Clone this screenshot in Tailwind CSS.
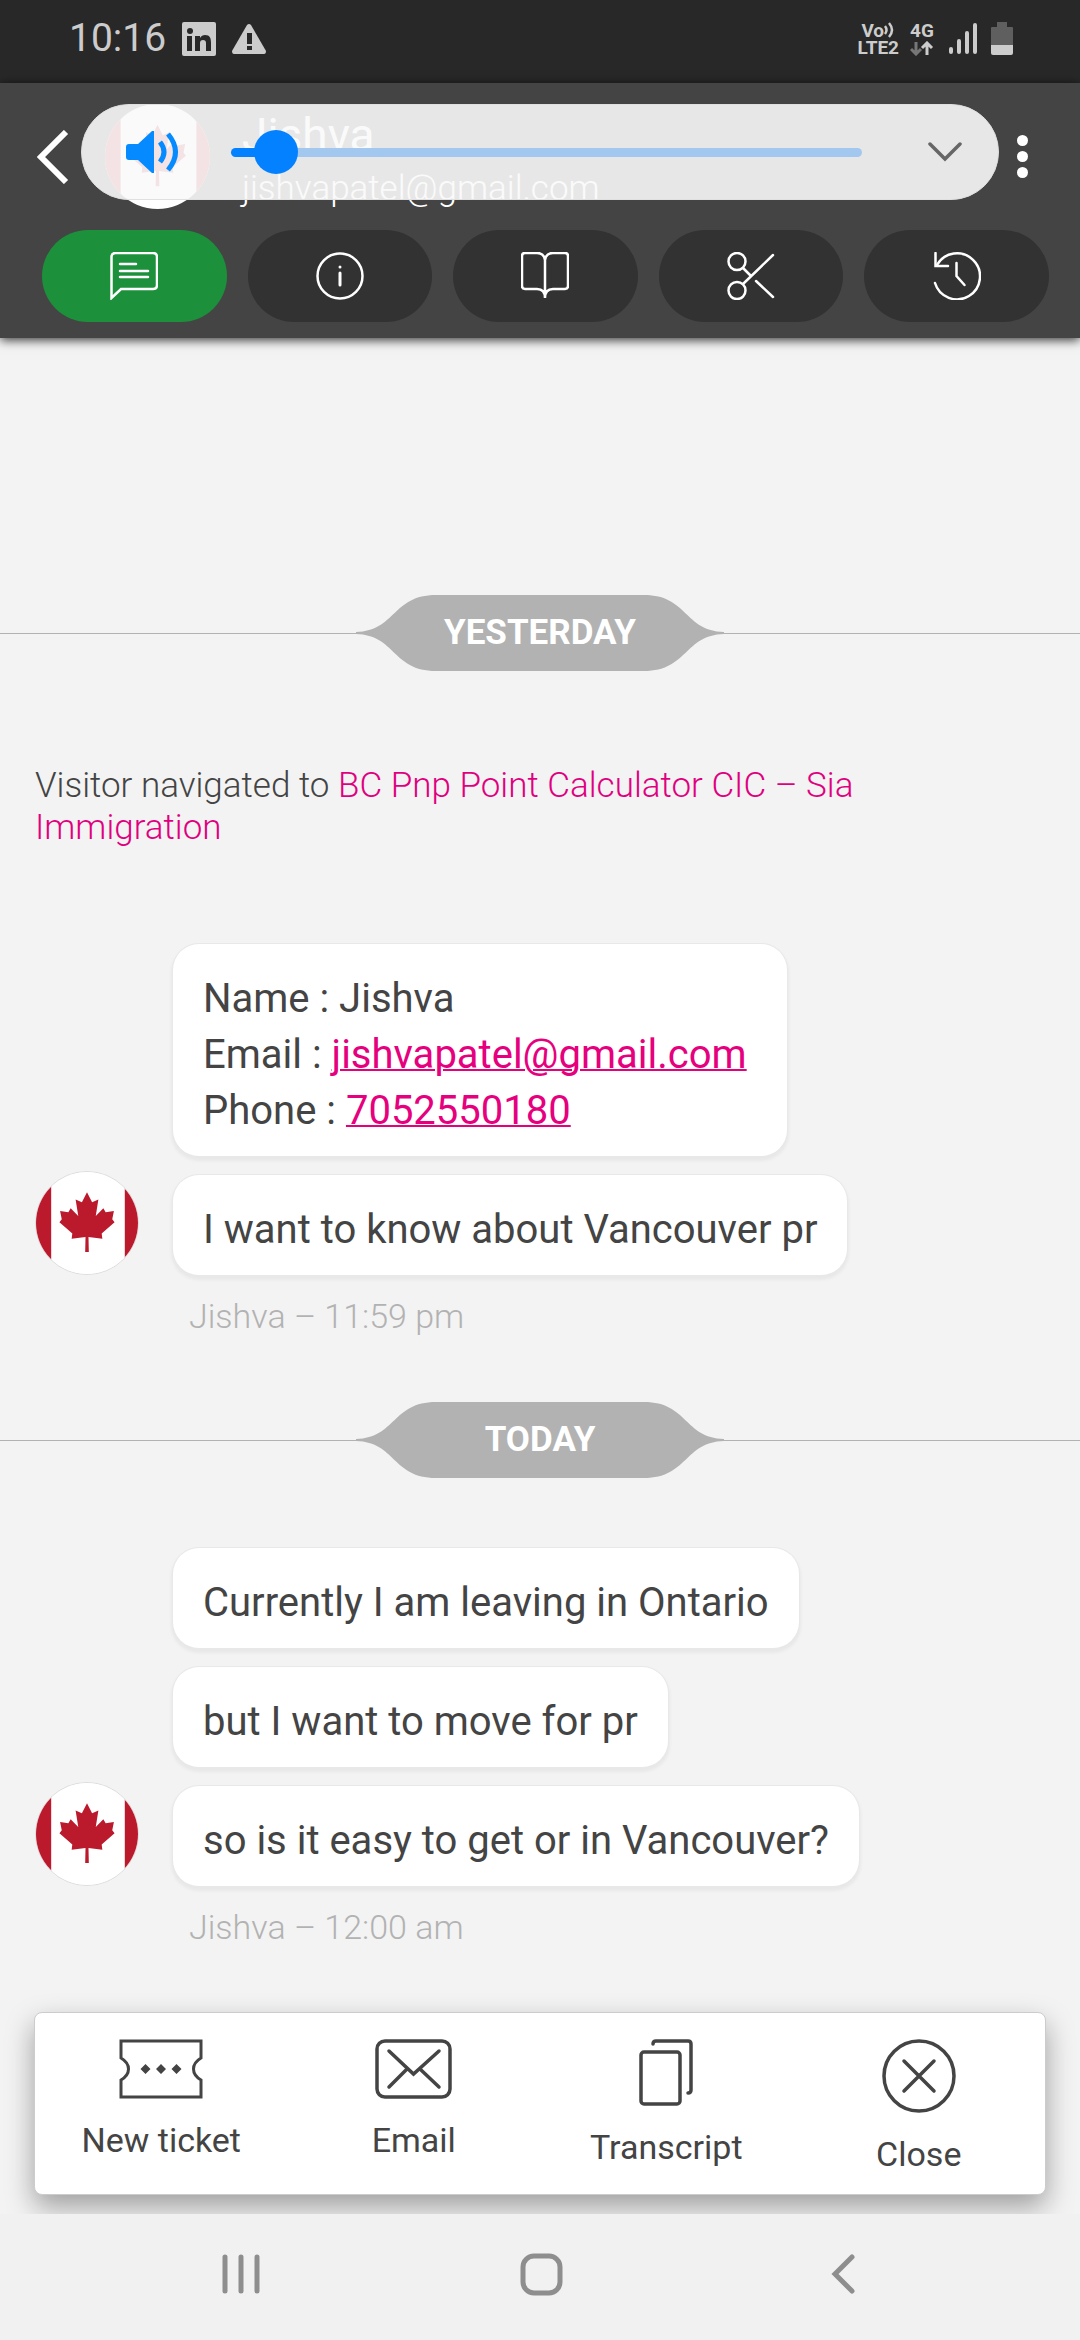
<!DOCTYPE html>
<html lang="en">
<head>
    <meta charset="UTF-8">
    <title>Chat - Jishva</title>
    <meta name="viewport" content="width=device-width, initial-scale=1">
    <script src="https://cdn.jsdelivr.net/npm/@tailwindcss/browser@4"></script>
</head>
<body class="bg-[#f3f3f3] min-h-screen flex flex-col font-['Roboto',sans-serif] text-[#444444]">

    <!-- shared drawings -->
    <svg class="hidden">
        <symbol id="flag" viewBox="0 0 309 309">
            <rect width="309" height="309" fill="#fff"/>
            <rect width="46" height="309" fill="#bb1a2d"/>
            <rect x="269" width="40" height="309" fill="#bb1a2d"/>
            <path fill="#bb1a2d" d="M154.5 61L170 92l19-9-8 50 23-23 7 12 25-4-5 25 7 9-39 34 2 16-42-5 1 45h-11l1-45-42 5 2-16-39-34 7-9-5-25 25 4 7-12 23 23-8-50 19 9z"/>
        </symbol>
        <symbol id="badge" viewBox="0 0 368 76">
            <path fill="#b2b2b2" d="M0 37C40 36 36 0 80 0H288C332 0 328 36 368 37V39C328 40 332 76 288 76H80C36 76 40 40 0 39Z"/>
        </symbol>
    </svg>

    <!-- status bar -->
    <div class="bg-[#282828] text-[#cccccc] h-[83px] pl-[69px] pr-[67px] pb-1.5 flex items-center justify-between">
        <div class="flex items-center gap-4">
            <span class="text-[39px] leading-none">10:16</span>
            <svg class="w-[34px] h-[34px]" viewBox="0 0 34 34">
                <rect width="34" height="34" rx="2" fill="#cccccc"/>
                <g fill="#282828"><circle cx="8" cy="9" r="3"/><rect x="5" y="14" width="5" height="15"/><path d="M13 14h5v2c1-2 3-3 5-3 5 0 6 3 6 8v8h-5v-8c0-2-1-3-3-3s-3 1-3 3v8h-5z"/></g>
            </svg>
            <svg class="w-[34px] h-[30px]" viewBox="0 0 34 30">
                <path fill="#cccccc" d="M15 1q2-2 4 0l15 26q0 3-2 3H2q-2 0-2-3z"/>
                <path fill="#282828" d="M15 9h5v11h-5zM15 22h5v4h-5z"/>
            </svg>
        </div>
        <div class="flex items-center gap-[11px] font-bold leading-none">
            <div class="flex flex-col items-center text-[19px] leading-[17px]">
                <span class="flex items-center">Vo<svg class="w-[11px] h-4" viewBox="0 0 11 16" fill="none" stroke="#cccccc" stroke-width="2.5"><path d="M1 4q3 4 0 8M5 1q6 7 0 14"/></svg></span>
                <span>LTE2</span>
            </div>
            <div class="flex flex-col items-center gap-[2px] text-[19px] leading-[17px]">
                <span>4G</span>
                <svg class="w-6 h-[15px]" viewBox="0 0 24 15" fill="none" stroke-width="3"><path stroke="#777" d="M6 1v12M1 8l5 5 5-5"/><path stroke="#cccccc" d="M17 14V2M12 7l5-5 5 5"/></svg>
            </div>
            <svg class="w-[28px] h-[31px] ml-1" viewBox="0 0 28 31" stroke="#cccccc" stroke-width="4" stroke-linecap="round"><path d="M2 26v3M10 18v11M18 10v19M26 2v27"/></svg>
            <svg class="w-[22px] h-[33px] ml-[3px]" viewBox="0 0 22 33"><path fill="#5f5f5f" d="M6 0h10v5h5q1 0 1 1v17H0V6q0-1 1-1h5z"/><path fill="#cccccc" d="M0 23h22v8q0 2-2 2H2q-2 0-2-2z"/></svg>
        </div>
    </div>

    <!-- header -->
    <header class="relative z-10 bg-[#444444] pt-[21px] pb-4 shadow-[0_2px_10px_rgba(0,0,0,0.8)]">
        <div class="flex items-start h-[105px] pl-[37px] pr-[52px]">
            <button type="button" aria-label="Back" class="w-[32px] h-[105px] flex items-center">
                <svg class="w-[32px] h-[54px]" viewBox="0 0 32 54" fill="none" stroke="#fff" stroke-width="6"><path d="M29 2L4 27l25 25"/></svg>
            </button>
            <svg class="ml-9 w-[105px] h-[105px] rounded-full"><use href="#flag"/></svg>
            <div class="ml-8 pt-1 flex-1 text-white leading-[54px]">
                <h1 class="text-[46px]">Jishva</h1>
                <p class="text-[35px] font-light">jishvapatel@gmail.com</p>
            </div>
            <button type="button" aria-label="Menu" class="h-[105px] flex items-center">
                <svg class="w-[11px] h-[43px]" viewBox="0 0 11 43" fill="#fff"><circle cx="5.5" cy="5.5" r="5.5"/><circle cx="5.5" cy="21.5" r="5.5"/><circle cx="5.5" cy="37.5" r="5.5"/></svg>
            </button>
        </div>

        <nav class="mt-[21px] pl-[42px] pr-[31px] grid grid-cols-5 gap-[21px]">
            <button type="button" aria-label="Chat" class="bg-[#1c903b] h-[92px] rounded-full flex items-center justify-center">
                <svg class="w-12 h-12" viewBox="0 0 48 48" fill="none" stroke="#fff" stroke-width="2.5" stroke-linecap="round"><path d="M1.5 46V5q0-4 4-4H43q4 0 4 4v28q0 4-4 4H11z"/><path d="M10 12h16M10 19h28M10 25h28"/></svg>
            </button>
            <button type="button" aria-label="Info" class="bg-[#323232] h-[92px] rounded-full flex items-center justify-center">
                <svg class="w-12 h-12" viewBox="0 0 48 48" fill="none" stroke="#fff" stroke-width="2.5"><circle cx="24" cy="24" r="22.5"/><path stroke-width="3" stroke-linecap="round" d="M24 21v12"/><circle cx="24" cy="15" r="1.5" fill="#fff" stroke="none"/></svg>
            </button>
            <button type="button" aria-label="Knowledge base" class="bg-[#323232] h-[92px] rounded-full flex items-center justify-center">
                <svg class="w-12 h-12" viewBox="0 0 48 48" fill="none" stroke="#fff" stroke-width="2.5"><path d="M24 8q-1-7-8-7H4q-3 0-3 3v30q0 3 3 3h12q8 0 8 9 0-9 8-9h12q3 0 3-3V4q0-3-3-3H32q-7 0-8 7v38"/></svg>
            </button>
            <button type="button" aria-label="Cut" class="bg-[#323232] h-[92px] rounded-full flex items-center justify-center">
                <svg class="w-12 h-12" viewBox="0 0 48 48" fill="none" stroke="#fff" stroke-width="2.5" stroke-linecap="round"><circle cx="10" cy="9.5" r="8.5"/><circle cx="10" cy="38.5" r="8.5"/><path d="M16 32L46 3M16 16l8 8M29 29l17 16"/></svg>
            </button>
            <button type="button" aria-label="History" class="bg-[#323232] h-[92px] rounded-full flex items-center justify-center">
                <svg class="w-12 h-12" viewBox="0 0 48 48" fill="none" stroke="#fff" stroke-width="2.5" stroke-linecap="round"><path d="M2 31A23 23 0 1 0 4 13"/><path d="M2.500 1v13H15"/><path d="M23.500 11v13l8 9"/></svg>
            </button>
        </nav>

        <!-- volume popup -->
        <div class="absolute top-[21px] inset-x-[81px] h-24 rounded-full bg-[#fafafa]/90 border border-[#e0e0e0] flex items-center pl-11 pr-9">
            <svg class="w-[53px] h-[42px]" viewBox="0 0 53 42"><path fill="#058bff" d="M0 16q0-3 3-3h9L26 0h2v42h-2L12 29H3q-3 0-3-3z"/><path fill="none" stroke="#058bff" stroke-width="5" d="M34 11q8 10 0 20M42 3q15 18 0 36"/></svg>
            <input type="range" aria-label="Volume" min="0" max="100" value="4" class="appearance-none ml-[52px] flex-1 h-[9px] rounded-full bg-linear-to-r from-[#0381fe] from-7% to-[#a3c8ef] to-7% [&::-webkit-slider-thumb]:appearance-none [&::-webkit-slider-thumb]:w-11 [&::-webkit-slider-thumb]:h-11 [&::-webkit-slider-thumb]:rounded-full [&::-webkit-slider-thumb]:bg-[#0381fe]">
            <button type="button" aria-label="Expand" class="ml-[66px]">
                <svg class="w-[34px] h-5" viewBox="0 0 34 20" fill="none" stroke="#666" stroke-width="3.500" stroke-linecap="round"><path d="M2 2l15 15L32 2"/></svg>
            </button>
        </div>
    </header>

    <!-- conversation -->
    <main class="flex-1 pt-[257px]">
        <div class="flex items-center">
            <hr class="flex-1 border-[#b2b2b2]">
            <div class="relative w-[368px] h-[76px] flex items-center justify-center">
                <svg class="absolute inset-0 w-full h-full"><use href="#badge"/></svg>
                <span class="relative text-[35px] font-bold text-white">YESTERDAY</span>
            </div>
            <hr class="flex-1 border-[#b2b2b2]">
        </div>

        <p class="mx-[35px] mt-[94px] mb-[95px] max-w-[900px] text-[35px] leading-[42px] font-light">Visitor navigated to <a href="#" class="text-[#e0007f]">BC Pnp Point Calculator CIC – Sia Immigration</a></p>

        <section class="px-[35px]">
            <div class="flex items-end gap-[34px]">
                <svg class="w-[104px] h-[104px] rounded-full border border-[#dddddd]"><use href="#flag"/></svg>
                <div class="flex flex-col items-start gap-[19px] text-[40px] leading-[56px]">
                    <div class="bg-white rounded-[26px] pl-[30px] pr-10 pt-[27px] pb-[17px] shadow-[0_0_0_1px_#e8e8e8,0_3px_3px_2px_#e8e8e8]">
                        <p>Name : Jishva</p>
                        <p>Email : <a href="#" class="text-[#e6007e] underline decoration-2">jishvapatel@gmail.com</a></p>
                        <p>Phone : <a href="#" class="text-[#e6007e] underline decoration-2">7052550180</a></p>
                    </div>
                    <p class="bg-white rounded-[26px] px-[30px] pt-[27px] pb-[17px] shadow-[0_0_0_1px_#e8e8e8,0_3px_3px_2px_#e8e8e8]">I want to know about Vancouver pr</p>
                </div>
            </div>
            <p class="mt-5 ml-[154px] text-[34px] leading-[42px] font-light text-[#b2b2b2]">Jishva – 11:59 pm</p>
        </section>

        <div class="mt-[65px] mb-[70px] flex items-center">
            <hr class="flex-1 border-[#b2b2b2]">
            <div class="relative w-[368px] h-[76px] flex items-center justify-center">
                <svg class="absolute inset-0 w-full h-full"><use href="#badge"/></svg>
                <span class="relative text-[35px] font-bold text-white">TODAY</span>
            </div>
            <hr class="flex-1 border-[#b2b2b2]">
        </div>

        <section class="px-[35px]">
            <div class="flex items-end gap-[34px]">
                <svg class="w-[104px] h-[104px] rounded-full border border-[#dddddd]"><use href="#flag"/></svg>
                <div class="flex flex-col items-start gap-[19px] text-[40px] leading-[56px]">
                    <p class="bg-white rounded-[26px] px-[30px] pt-[27px] pb-[17px] shadow-[0_0_0_1px_#e8e8e8,0_3px_3px_2px_#e8e8e8]">Currently I am leaving in Ontario</p>
                    <p class="bg-white rounded-[26px] px-[30px] pt-[27px] pb-[17px] shadow-[0_0_0_1px_#e8e8e8,0_3px_3px_2px_#e8e8e8]">but I want to move for pr</p>
                    <p class="bg-white rounded-[26px] px-[30px] pt-[27px] pb-[17px] shadow-[0_0_0_1px_#e8e8e8,0_3px_3px_2px_#e8e8e8]">so is it easy to get or in Vancouver?</p>
                </div>
            </div>
            <p class="mt-5 ml-[154px] text-[34px] leading-[42px] font-light text-[#b2b2b2]">Jishva – 12:00 am</p>
        </section>
    </main>

    <!-- actions -->
    <div class="mx-[34px] mb-[19px] bg-white rounded-lg border border-[#cccccc] shadow-[0_12px_28px_rgba(0,0,0,0.35)] grid grid-cols-4 h-[183px] pt-[26px] text-[34px] leading-[42px]">
        <button type="button" class="flex flex-col items-center justify-start gap-5">
            <svg class="w-[84px] h-[60px]" viewBox="0 0 84 60" fill="none" stroke="#444" stroke-width="3"><path d="M2 2h80v17c-10 6-10 16 0 22v17H2V41c10-6 10-16 0-22z"/><path fill="#444" stroke="none" d="M26.500 25l5 5-5 5-5-5zM42 25l5 5-5 5-5-5zM57.500 25l5 5-5 5-5-5z"/></svg>
            New ticket
        </button>
        <button type="button" class="flex flex-col items-center justify-start gap-5">
            <svg class="w-[77px] h-[60px]" viewBox="0 0 77 60" fill="none" stroke="#444" stroke-width="3.500" stroke-linecap="round"><rect x="2" y="2" width="73" height="56" rx="8"/><path d="M14 12l24.500 23L64 12M14 48l18-18M64 48L45 30"/></svg>
            Email
        </button>
        <button type="button" class="flex flex-col items-center justify-start gap-5">
            <svg class="w-[54px] h-[67px]" viewBox="0 0 54 67" fill="none" stroke="#444" stroke-width="3.500" stroke-linecap="round"><rect x="2" y="13" width="39" height="52" rx="3"/><path d="M14 5q0-3 3-3h32q3 0 3 3v46q0 3-3 3"/></svg>
            Transcript
        </button>
        <button type="button" class="flex flex-col items-center justify-start gap-5">
            <svg class="w-[74px] h-[74px]" viewBox="0 0 74 74" fill="none" stroke="#444" stroke-width="3.500" stroke-linecap="round"><circle cx="37" cy="37" r="35"/><path d="M22 22l30 30M52 22L22 52"/></svg>
            Close
        </button>
    </div>

    <!-- system navigation -->
    <nav class="relative bg-[#f1f1f1] h-[126px] pl-[90px] pr-[86px] pb-[6px] grid grid-cols-3 items-center justify-items-center">
        <button type="button" aria-label="Recents"><svg class="w-[38px] h-10" viewBox="0 0 38 40" stroke="#8e8e8e" stroke-width="5" stroke-linecap="round"><path d="M3 3v34M19 3v34M35 3v34"/></svg></button>
        <button type="button" aria-label="Home"><svg class="w-[43px] h-[43px]" viewBox="0 0 43 43" fill="none" stroke="#8e8e8e" stroke-width="5"><rect x="3" y="3" width="37" height="37" rx="11"/></svg></button>
        <button type="button" aria-label="Back"><svg class="w-6 h-10" viewBox="0 0 24 40" fill="none" stroke="#8e8e8e" stroke-width="5" stroke-linecap="round"><path d="M21 3L4 20l17 17"/></svg></button>
    </nav>
</body>
</html>
